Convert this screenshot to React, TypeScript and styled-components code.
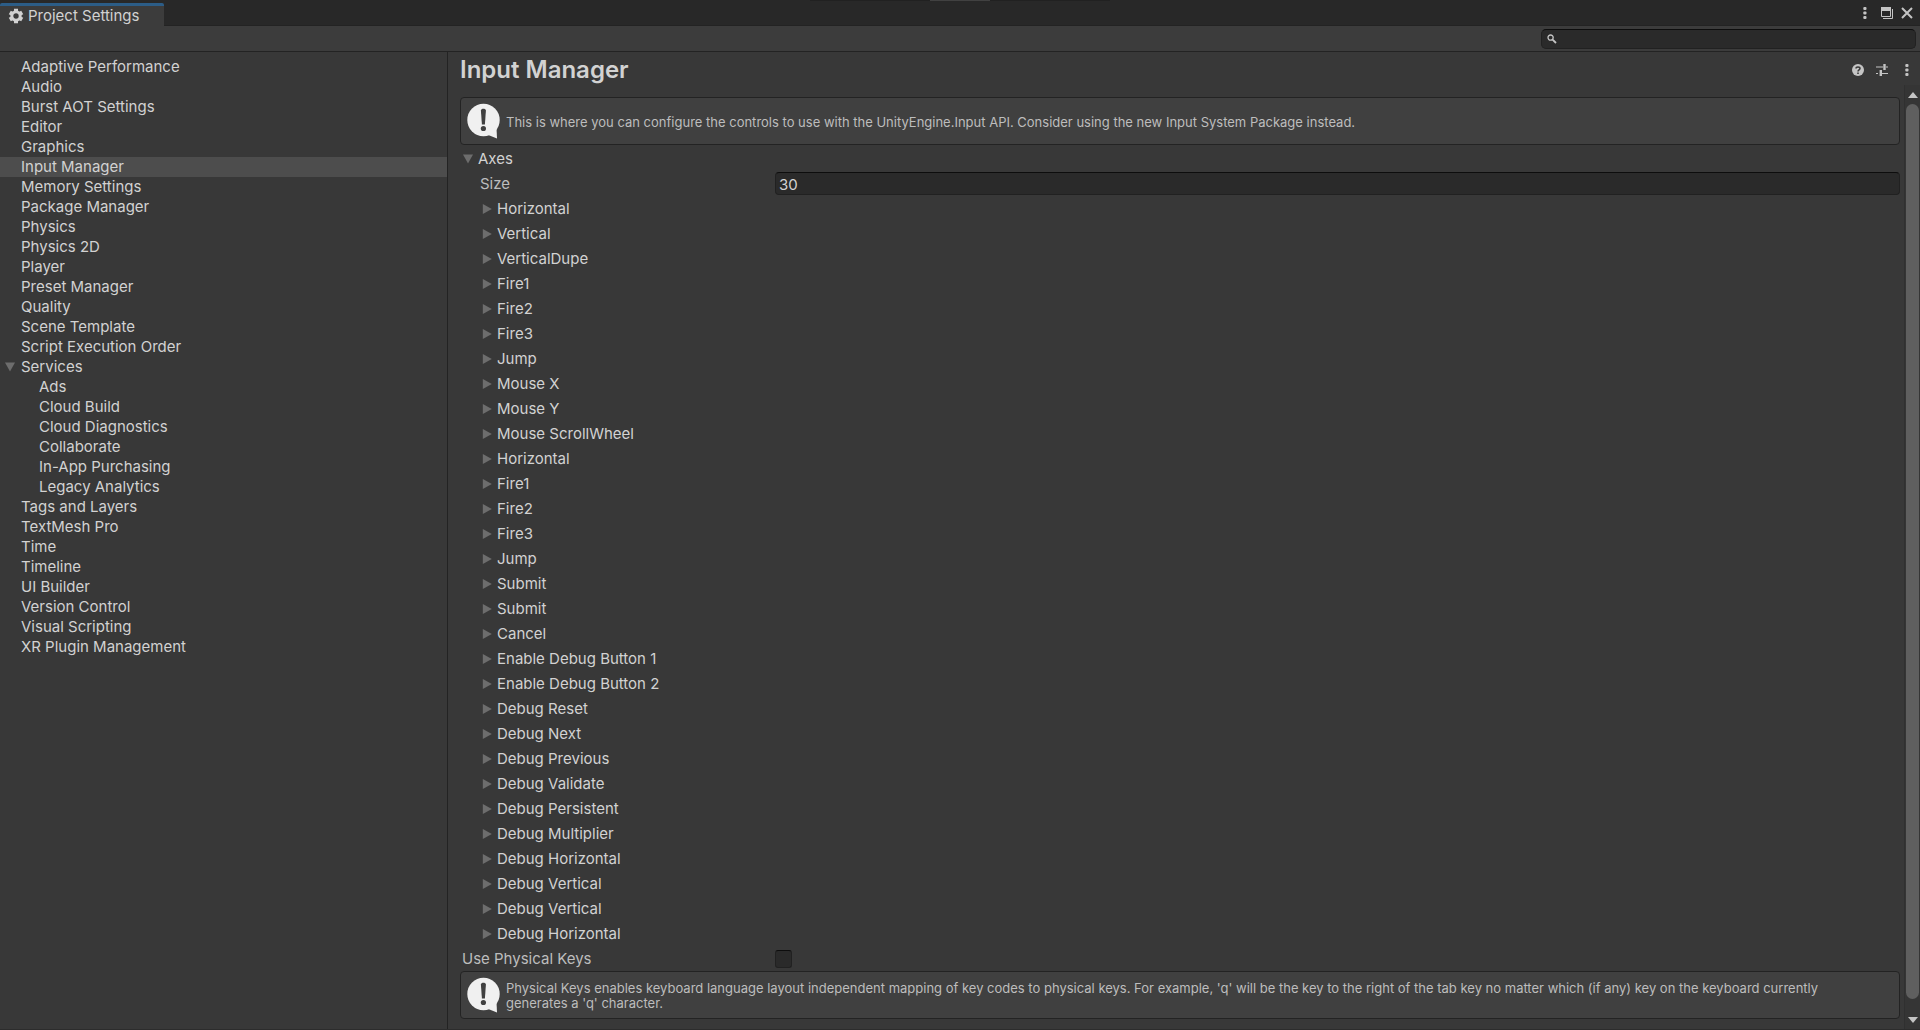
import React, { useState } from "react";
import styled, { createGlobalStyle } from "styled-components";

const color = {
  window: "#383838",
  bar: "#282828",
  toolbar: "#3c3c3c",
  line: "#232323",
  text: "#d2d2d2",
  label: "#bdbdbd",
  icon: "#c4c4c4",
  arrow: "#6d6d6d",
  field: "#2a2a2a",
  fieldEdge: "#212121",
  fieldTop: "#0d0d0d",
  help: "#404040",
};

const GlobalStyle = createGlobalStyle`
  *, *::before, *::after { box-sizing: border-box; }
  body {
    margin: 0;
    background: ${color.window};
    color: ${color.text};
    font: 15px/20px Inter, "Liberation Sans", sans-serif;
  }
  button, input {
    font: inherit;
    color: inherit;
  }
  button {
    margin: 0;
    padding: 0;
    border: 0;
    background: none;
    text-align: left;
  }
`;

const Window = styled.div`
  display: flex;
  flex-direction: column;
  height: 100vh;
  border-bottom: 1px solid #2c2c2c;
`;

const TabBar = styled.header`
  display: flex;
  align-items: stretch;
  flex: none;
  height: 26px;
  padding-right: 4px;
  border-bottom: 1px solid ${color.line};
  background:
    linear-gradient(#414141, #414141) 50% 0 / 60px 1px no-repeat,
    linear-gradient(#212121, #212121) 50% 0 / 300px 1px no-repeat,
    ${color.bar};
`;

const Tab = styled.button`
  display: flex;
  align-items: center;
  gap: 4px;
  width: 164px;
  margin: 3px auto -1px 0;
  padding: 0 8px;
  border-top: 3px solid #2c5d87;
  border-radius: 2px 2px 0 0;
  background: ${color.toolbar};
`;

const IconButton = styled.button<{ $width: number }>`
  display: flex;
  align-items: center;
  justify-content: center;
  width: ${(p) => p.$width}px;
  color: ${color.icon};
`;

const Toolbar = styled.div`
  display: flex;
  align-items: center;
  justify-content: flex-end;
  flex: none;
  height: 26px;
  padding-right: 4px;
  border-bottom: 1px solid ${color.line};
  background: ${color.toolbar};
`;

const SearchBox = styled.label`
  display: flex;
  align-items: center;
  gap: 5px;
  width: 375px;
  height: 20px;
  padding: 0 5px;
  border: 1px solid ${color.fieldEdge};
  border-top-color: ${color.fieldTop};
  border-radius: 5px;
  background: ${color.field};
  color: ${color.icon};
`;

const SearchInput = styled.input`
  flex: 1;
  min-width: 0;
  height: 16px;
  padding: 0;
  border: 0;
  outline: 0;
  background: none;
`;

const Body = styled.div`
  display: flex;
  flex: 1;
  min-height: 0;
`;

const Sidebar = styled.nav`
  flex: none;
  width: 448px;
  padding-top: 5px;
  border-right: 1px solid ${color.line};
  overflow: hidden;
`;

const TreeItem = styled.button<{ $depth: number; $selected: boolean }>`
  display: flex;
  align-items: center;
  gap: 6px;
  width: 100%;
  height: 20px;
  padding-left: ${(p) => 5 + p.$depth * 18}px;
  background: ${(p) => (p.$selected ? "#4d4d4d" : "none")};
`;

const ArrowSlot = styled.span`
  display: flex;
  flex: none;
  width: 10px;
  color: ${color.arrow};
`;

const Main = styled.main`
  display: flex;
  flex-direction: column;
  flex: 1;
  min-width: 0;
`;

const PanelHeader = styled.div`
  display: flex;
  align-items: stretch;
  flex: none;
  height: 33px;
  padding: 2px 0 0 12px;
`;

const Title = styled.h1`
  flex: 1;
  margin: 0;
  font-size: 24px;
  font-weight: 600;
  line-height: 31px;
`;

const ScrollArea = styled.div`
  display: flex;
  flex: 1;
  min-height: 0;
`;

const Content = styled.div`
  flex: 1;
  min-width: 0;
  padding: 12px 4px 0 12px;
  overflow: hidden;
`;

const HelpBox = styled.div`
  display: flex;
  align-items: center;
  gap: 6px;
  height: 48px;
  margin: 0 0 1px;
  padding: 0 20px 0 6px;
  border: 1px solid ${color.line};
  border-radius: 4px;
  background: ${color.help};
  color: ${color.label};
  font-size: 13px;
  line-height: 15px;
`;

const HelpText = styled.p`
  flex: 1;
  margin: 0;
  padding-top: 2px;
`;

const Row = styled.div<{ $indent: number }>`
  display: flex;
  align-items: center;
  height: 25px;
  padding-left: ${(p) => p.$indent}px;
`;

const Foldout = styled.button`
  display: flex;
  align-items: center;
  gap: 5px;
  height: 25px;
`;

const FieldLabel = styled.label<{ $width: number }>`
  flex: none;
  width: ${(p) => p.$width}px;
  color: ${color.label};
`;

const NumberField = styled.input`
  flex: 1;
  min-width: 0;
  height: 23px;
  padding: 2px 3px 0;
  border: 1px solid ${color.fieldEdge};
  border-top-color: ${color.fieldTop};
  border-radius: 4px;
  outline: 0;
  background: ${color.field};
`;

const CheckBox = styled.input`
  appearance: none;
  width: 17px;
  height: 18px;
  margin: 0;
  border: 1px solid ${color.fieldEdge};
  border-top-color: ${color.fieldTop};
  border-radius: 3px;
  background: ${color.field};
  &:checked {
    background: ${color.icon};
  }
`;

const Scrollbar = styled.div`
  display: flex;
  flex-direction: column;
  flex: none;
  width: 16px;
  padding: 0 1px;
  border-left: 1px solid #303030;
  background: #353535;
`;

const ScrollButton = styled.button`
  display: flex;
  align-items: center;
  justify-content: center;
  height: 19px;
  color: ${color.icon};
`;

const Thumb = styled.div`
  flex: 1;
  margin-bottom: 11px;
  border-radius: 7px;
  background: #5f5f5f;
`;

const ArrowDown = () => (
  <svg width="10" height="10" viewBox="0 0 10 10" fill="currentColor" aria-hidden="true">
    <path d="M0 0.5h10L5 9.5z" />
  </svg>
);

const ArrowRight = () => (
  <svg width="10" height="10" viewBox="0 0 10 10" fill="currentColor" aria-hidden="true">
    <path d="M0.8 0v10L9.8 5z" />
  </svg>
);

const GearIcon = () => (
  <svg width="16" height="16" viewBox="0 0 16 16" fill="none" stroke="currentColor" aria-hidden="true">
    <circle cx="8" cy="8" r="4.2" strokeWidth="3" />
    <g strokeWidth="4">
      <path d="M8 0.8v2.4M8 12.8v2.4" />
      <path d="M8 0.8v2.4M8 12.8v2.4" transform="rotate(60 8 8)" />
      <path d="M8 0.8v2.4M8 12.8v2.4" transform="rotate(120 8 8)" />
    </g>
  </svg>
);

const KebabIcon = () => (
  <svg width="4" height="12" viewBox="0 0 4 12" fill="currentColor" aria-hidden="true">
    <rect x="0.3" width="3.2" height="3" rx="1" />
    <rect x="0.3" y="4.5" width="3.2" height="3" rx="1" />
    <rect x="0.3" y="9" width="3.2" height="3" rx="1" />
  </svg>
);

const WindowIcon = () => (
  <svg width="12" height="12" viewBox="0 0 12 12" fill="none" stroke="currentColor" aria-hidden="true">
    <path d="M0.5 0.5h9v9h-9z" />
    <path d="M0 2h10" strokeWidth="4" />
    <path d="M2 11.5h9.5V2" />
  </svg>
);

const CloseIcon = () => (
  <svg width="12" height="12" viewBox="0 0 12 12" fill="none" stroke="currentColor" strokeWidth="2" aria-hidden="true">
    <path d="M1 1l10 10M11 1L1 11" />
  </svg>
);

const SearchIcon = () => (
  <svg width="10" height="10" viewBox="0 0 10 10" fill="none" stroke="currentColor" aria-hidden="true">
    <circle cx="3.6" cy="3.6" r="2.6" strokeWidth="1.3" />
    <path d="M5.6 5.6L9 9" strokeWidth="1.8" />
  </svg>
);

const HelpIcon = () => (
  <svg width="12" height="12" viewBox="0 0 12 12" fill="none" aria-hidden="true">
    <circle cx="6" cy="6" r="6" fill="currentColor" />
    <path d="M4 4.6C4 2.4 8 2.4 8 4.6 8 5.9 6 5.9 6 7.4" stroke={color.window} strokeWidth="1.5" />
    <path d="M6 8.4v1.5" stroke={color.window} strokeWidth="1.6" />
  </svg>
);

const PresetIcon = () => (
  <svg width="12" height="12" viewBox="0 0 12 12" fill="none" stroke="currentColor" aria-hidden="true">
    <path d="M0 3h7M10 3h2M0 9.5h2M5 9.5h7" strokeWidth="1.2" />
    <path d="M8.5 0v6M4.8 6v6" strokeWidth="2.4" />
  </svg>
);

const InfoIcon = () => (
  <svg width="33" height="36" viewBox="0 0 33 36" aria-hidden="true">
    <circle cx="16.5" cy="17" r="16.2" fill="#f0f0f0" />
    <path d="M20 31.5L30 35.5L29.5 25z" fill="#f0f0f0" />
    <path d="M13.9 7.5C13.9 5 18.9 5 18.9 7.5L17.9 21.5h-3z" fill={color.help} />
    <circle cx="16.4" cy="25.5" r="2.6" fill={color.help} />
  </svg>
);

const ScrollUp = () => (
  <svg width="10" height="6" viewBox="0 0 10 6" fill="currentColor" aria-hidden="true">
    <path d="M0 6h10L5 0z" />
  </svg>
);

const ScrollDown = () => (
  <svg width="10" height="6" viewBox="0 0 10 6" fill="currentColor" aria-hidden="true">
    <path d="M0 0h10L5 6z" />
  </svg>
);

type Section = { name: string; depth?: number; open?: boolean };

const sections: Section[] = [
  { name: "Adaptive Performance" },
  { name: "Audio" },
  { name: "Burst AOT Settings" },
  { name: "Editor" },
  { name: "Graphics" },
  { name: "Input Manager" },
  { name: "Memory Settings" },
  { name: "Package Manager" },
  { name: "Physics" },
  { name: "Physics 2D" },
  { name: "Player" },
  { name: "Preset Manager" },
  { name: "Quality" },
  { name: "Scene Template" },
  { name: "Script Execution Order" },
  { name: "Services", open: true },
  { name: "Ads", depth: 1 },
  { name: "Cloud Build", depth: 1 },
  { name: "Cloud Diagnostics", depth: 1 },
  { name: "Collaborate", depth: 1 },
  { name: "In-App Purchasing", depth: 1 },
  { name: "Legacy Analytics", depth: 1 },
  { name: "Tags and Layers" },
  { name: "TextMesh Pro" },
  { name: "Time" },
  { name: "Timeline" },
  { name: "UI Builder" },
  { name: "Version Control" },
  { name: "Visual Scripting" },
  { name: "XR Plugin Management" },
];

const axes = [
  "Horizontal", "Vertical", "VerticalDupe", "Fire1", "Fire2", "Fire3", "Jump",
  "Mouse X", "Mouse Y", "Mouse ScrollWheel", "Horizontal", "Fire1", "Fire2",
  "Fire3", "Jump", "Submit", "Submit", "Cancel", "Enable Debug Button 1",
  "Enable Debug Button 2", "Debug Reset", "Debug Next", "Debug Previous",
  "Debug Validate", "Debug Persistent", "Debug Multiplier", "Debug Horizontal",
  "Debug Vertical", "Debug Vertical", "Debug Horizontal",
];

export default function App() {
  const [selected, setSelected] = useState("Input Manager");
  const [size, setSize] = useState("30");
  const [physicalKeys, setPhysicalKeys] = useState(false);

  return (
    <>
      <GlobalStyle />
      <Window>
        <TabBar>
          <Tab>
            <GearIcon />
            Project Settings
          </Tab>
          <IconButton $width={22} aria-label="Tab options"><KebabIcon /></IconButton>
          <IconButton $width={22} aria-label="Maximize"><WindowIcon /></IconButton>
          <IconButton $width={18} aria-label="Close"><CloseIcon /></IconButton>
        </TabBar>
        <Toolbar>
          <SearchBox>
            <SearchIcon />
            <SearchInput type="text" aria-label="Search settings" />
          </SearchBox>
        </Toolbar>
        <Body>
          <Sidebar>
            {sections.map((s) => (
              <TreeItem
                key={s.name}
                $depth={s.depth ?? 0}
                $selected={s.name === selected}
                onClick={() => setSelected(s.name)}
              >
                <ArrowSlot>{s.open && <ArrowDown />}</ArrowSlot>
                {s.name}
              </TreeItem>
            ))}
          </Sidebar>
          <Main>
            <PanelHeader>
              <Title>Input Manager</Title>
              <IconButton $width={24} aria-label="Help"><HelpIcon /></IconButton>
              <IconButton $width={24} aria-label="Presets"><PresetIcon /></IconButton>
              <IconButton $width={26} aria-label="More options"><KebabIcon /></IconButton>
            </PanelHeader>
            <ScrollArea>
              <Content>
                <HelpBox>
                  <InfoIcon />
                  <HelpText>
                    This is where you can configure the controls to use with the
                    UnityEngine.Input API. Consider using the new Input System
                    Package instead.
                  </HelpText>
                </HelpBox>
                <Row $indent={3}>
                  <Foldout aria-expanded="true">
                    <ArrowSlot><ArrowDown /></ArrowSlot>
                    Axes
                  </Foldout>
                </Row>
                <Row $indent={20}>
                  <FieldLabel $width={295} htmlFor="size">Size</FieldLabel>
                  <NumberField id="size" value={size} onChange={(e) => setSize(e.target.value)} />
                </Row>
                {axes.map((name, i) => (
                  <Row key={i} $indent={22}>
                    <Foldout aria-expanded="false">
                      <ArrowSlot><ArrowRight /></ArrowSlot>
                      {name}
                    </Foldout>
                  </Row>
                ))}
                <Row $indent={2}>
                  <FieldLabel $width={313} htmlFor="physical">Use Physical Keys</FieldLabel>
                  <CheckBox
                    id="physical"
                    type="checkbox"
                    checked={physicalKeys}
                    onChange={(e) => setPhysicalKeys(e.target.checked)}
                  />
                </Row>
                <HelpBox>
                  <InfoIcon />
                  <HelpText>
                    Physical Keys enables keyboard language layout independent
                    mapping of key codes to physical keys. For example, 'q' will
                    be the key to the right of the tab key no matter which (if
                    any) key on the keyboard currently generates a 'q' character.
                  </HelpText>
                </HelpBox>
              </Content>
              <Scrollbar>
                <ScrollButton aria-label="Scroll up"><ScrollUp /></ScrollButton>
                <Thumb />
                <ScrollButton aria-label="Scroll down"><ScrollDown /></ScrollButton>
              </Scrollbar>
            </ScrollArea>
          </Main>
        </Body>
      </Window>
    </>
  );
}
